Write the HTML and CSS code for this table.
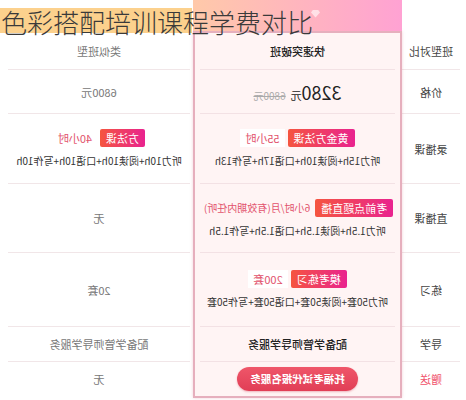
FILE: index.html
```html
<!DOCTYPE html>
<html lang="zh-CN">
<head>
    <meta charset="UTF-8">
    <meta name="viewport" content="width=device-width, initial-scale=1.0">
    <title>色彩搭配培训课程学费对比</title>
    <link rel="stylesheet" href="styles.css">
</head>
<body>
    <div class="page">
        <h1 class="title">色彩搭配培训课程学费对比</h1>

        <div class="compare">
            <div class="col col-label">
                <div class="cell row-h">班型对比</div>
                <div class="cell row-p">价格</div>
                <div class="cell row-r">录播课</div>
                <div class="cell row-l">直播课</div>
                <div class="cell row-x">练习</div>
                <div class="cell row-g">导学</div>
                <div class="cell row-z gift">赠送</div>
            </div>

            <div class="col col-main">
                <div class="main-head">
                    <svg class="gem" viewBox="0 0 10 10" width="9" height="9">
                        <path d="M2 1h6l2 3-5 5.5L0 4z" fill="#fff"/>
                    </svg>
                </div>
                <div class="main-body">
                    <div class="cell row-h strong">快速突破班</div>
                    <div class="cell row-p">
                        <div class="price">
                            <span class="price-now">3280<small>元</small></span>
                            <span class="price-old">6800元</span>
                        </div>
                    </div>
                    <div class="cell row-r">
                        <div class="tags">
                            <span class="tag">黄金方法课</span>
                            <span class="tag-note">55小时</span>
                        </div>
                        <div class="detail">听力15h+阅读10h+口语17h+写作13h</div>
                    </div>
                    <div class="cell row-l">
                        <div class="tags">
                            <span class="tag">考前点题直播</span>
                            <span class="tag-note plain">6小时/月(有效期内任听)</span>
                        </div>
                        <div class="detail">听力1.5h+阅读1.5h+口语1.5h+写作1.5h</div>
                    </div>
                    <div class="cell row-x">
                        <div class="tags">
                            <span class="tag">模考练习</span>
                            <span class="tag-note">200套</span>
                        </div>
                        <div class="detail">听力50套+阅读50套+口语50套+写作50套</div>
                    </div>
                    <div class="cell row-g strong">配备学管师导学服务</div>
                    <div class="cell row-z">
                        <span class="btn">托福考试代报名服务</span>
                    </div>
                </div>
            </div>

            <div class="col col-other">
                <div class="cell row-h">类似班型</div>
                <div class="cell row-p">6800元</div>
                <div class="cell row-r">
                    <div class="tags">
                        <span class="tag">方法课</span>
                        <span class="tag-note">40小时</span>
                    </div>
                    <div class="detail">听力10h+阅读10h+口语10h+写作10h</div>
                </div>
                <div class="cell row-l">无</div>
                <div class="cell row-x">20套</div>
                <div class="cell row-g">配备学管师导学服务</div>
                <div class="cell row-z">无</div>
            </div>
        </div>
    </div>
</body>
</html>
```

FILE: styles.css
```css
body {
    margin: 0;
    font-family: "Noto Sans CJK SC", "Noto Sans", sans-serif;
    background-color: #fff;
}

.page {
    position: relative;
    width: 466px;
    height: 400px;
    overflow: hidden;
}

/* title sits over the table, with a marker stripe behind it */
.title {
    position: absolute;
    left: 1px;
    top: 8px;
    z-index: 2;
    margin: 0;
    font-size: 26px;
    font-weight: 300;
    line-height: 28px;
    color: #3a3a3a;
    white-space: nowrap;
}

.title::before {
    content: "";
    position: absolute;
    left: -1px;
    top: 0;
    width: 192px;
    height: 25px;
    background-color: #fcd18d;
    z-index: -1;
}

/* the whole table is shown mirrored, as in the source picture */
.compare {
    display: flex;
    height: 400px;
    transform: scaleX(-1);
}

.col {
    display: flex;
    flex-direction: column;
    box-sizing: border-box;
}

.col-label {
    width: 64px;
    padding: 33px 0 0 6px;
    color: #444;
}

.col-other {
    width: 193px;
    padding: 33px 8px 0 3px;
    color: #777;
}

.col-main {
    width: 209px;
}

.main-head {
    position: relative;
    height: 31px;
    background: linear-gradient(to right, #ffa2d3, #ffc9a9);
}

.gem {
    position: absolute;
    left: 82px;
    top: 9px;
    opacity: 0.6;
}

.main-body {
    padding: 0 5px;
    border: 2px solid #e6afbd;
    background-color: #fff4f4;
    box-shadow: 0 0 3px rgba(220, 120, 150, 0.35);
    color: #2a2a2a;
}

.cell {
    display: flex;
    flex-direction: column;
    align-items: center;
    justify-content: center;
    box-sizing: border-box;
    border-bottom: 1px solid #f1e6e8;
    font-size: 11px;
    white-space: nowrap;
}

.main-body .cell {
    border-bottom-color: #f3e1e4;
}

.cell:last-child {
    border-bottom: none;
}

.row-h { height: 37px; }
.row-p { height: 44px; }
.row-r { height: 70px; }
.row-l { height: 69px; }
.row-x { height: 74px; }
.row-g { height: 35px; }
.row-z { height: 34px; }

.strong {
    font-weight: 500;
    color: #222;
}

.gift {
    color: #f0506a;
}

.tags {
    display: flex;
    align-items: center;
    gap: 3px;
    margin-bottom: 6px;
}

.tag {
    height: 18px;
    padding: 0 6px;
    border-radius: 2px;
    background: linear-gradient(to right, #e9238f, #f5553f);
    color: #fff;
    font-size: 11px;
    line-height: 18px;
}

.tag-note {
    height: 18px;
    padding: 0 5px;
    background-color: #fff;
    color: #e2526c;
    font-size: 11px;
    line-height: 18px;
}

.tag-note.plain {
    padding: 0 2px;
    background-color: transparent;
    font-size: 10px;
}

.detail {
    font-size: 10px;
    color: #333;
}

.price {
    display: flex;
    align-items: baseline;
    gap: 5px;
}

.price-now {
    font-size: 18px;
    color: #222;
}

.price-now small {
    font-size: 11px;
}

.price-old {
    font-size: 10px;
    color: #aaa;
    text-decoration: line-through;
}

.btn {
    height: 24px;
    padding: 0 13px;
    border-radius: 12px;
    background: linear-gradient(#ef5669, #e13e56);
    color: #fff;
    font-size: 10.5px;
    font-weight: bold;
    line-height: 24px;
    box-shadow: 0 1px 2px rgba(200, 40, 70, 0.3);
}
```
